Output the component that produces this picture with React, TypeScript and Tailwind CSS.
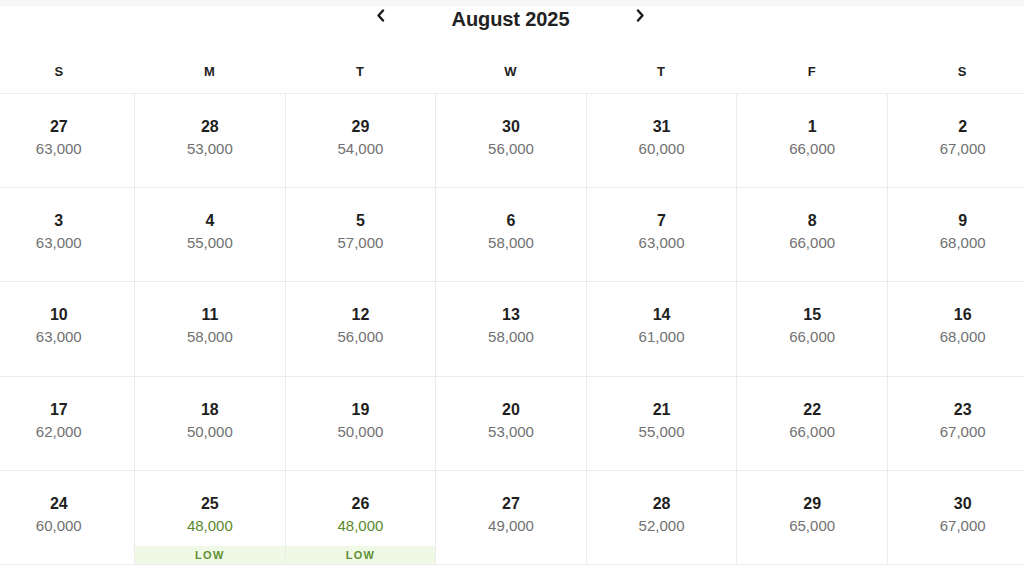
import React from "react";

type Day = { day: number; price: number; low?: boolean };

const WEEKDAYS = ["S", "M", "T", "W", "T", "F", "S"];

const WEEKS: Day[][] = [
  [
    { day: 27, price: 63000 },
    { day: 28, price: 53000 },
    { day: 29, price: 54000 },
    { day: 30, price: 56000 },
    { day: 31, price: 60000 },
    { day: 1, price: 66000 },
    { day: 2, price: 67000 },
  ],
  [
    { day: 3, price: 63000 },
    { day: 4, price: 55000 },
    { day: 5, price: 57000 },
    { day: 6, price: 58000 },
    { day: 7, price: 63000 },
    { day: 8, price: 66000 },
    { day: 9, price: 68000 },
  ],
  [
    { day: 10, price: 63000 },
    { day: 11, price: 58000 },
    { day: 12, price: 56000 },
    { day: 13, price: 58000 },
    { day: 14, price: 61000 },
    { day: 15, price: 66000 },
    { day: 16, price: 68000 },
  ],
  [
    { day: 17, price: 62000 },
    { day: 18, price: 50000 },
    { day: 19, price: 50000 },
    { day: 20, price: 53000 },
    { day: 21, price: 55000 },
    { day: 22, price: 66000 },
    { day: 23, price: 67000 },
  ],
  [
    { day: 24, price: 60000 },
    { day: 25, price: 48000, low: true },
    { day: 26, price: 48000, low: true },
    { day: 27, price: 49000 },
    { day: 28, price: 52000 },
    { day: 29, price: 65000 },
    { day: 30, price: 67000 },
  ],
];

function Chevron({ dir }: { dir: "left" | "right" }) {
  return (
    <svg width="10" height="13" viewBox="0 0 10 13" className="-translate-y-[4px]">
      <polyline
        points={dir === "left" ? "7,1.5 2.5,6.5 7,11.5" : "3,1.5 7.5,6.5 3,11.5"}
        fill="none"
        stroke="#1a1a1a"
        strokeWidth="2.4"
        strokeLinecap="round"
        strokeLinejoin="round"
      />
    </svg>
  );
}

export default function App() {
  return (
    <div className="w-[1024px] h-[567px] overflow-hidden bg-white font-['Liberation_Sans',Arial,sans-serif] text-[#222]">
      <div className="h-[6px] bg-[#f7f7f7]" />
      <div className="w-[1054px] -ml-[16.5px]">
        <div className="h-[27px] flex items-center justify-center gap-[66px]">
          <Chevron dir="left" />
          <h2 className="text-[20px] leading-[27px] font-bold tracking-[-0.1px]">August 2025</h2>
          <Chevron dir="right" />
        </div>

        <div className="grid grid-cols-7 h-[60px] items-end pb-[13px]">
          {WEEKDAYS.map((d, i) => (
            <div key={i} className="text-center text-[13px] leading-[16px] font-bold">
              {d}
            </div>
          ))}
        </div>

        <div className="grid grid-cols-7 border-b border-[#ececec]">
          {WEEKS.flat().map((d, i) => (
            <div
              key={i}
              className={`h-[94.2px] flex flex-col items-center border-t border-[#ececec] pt-[23px] ${
                i % 7 === 0 ? "" : "border-l"
              }`}
            >
              <div className="text-[16px] leading-[20px] font-bold text-[#1f1f1f]">{d.day}</div>
              <div
                className={`mt-[2px] text-[15px] leading-[20px] ${
                  d.low ? "text-[#5a8a2c]" : "text-[#717171]"
                }`}
              >
                {d.price.toLocaleString("en-US")}
              </div>
              {d.low && (
                <div className="mt-auto w-full h-[18px] bg-[#eff9e5] flex items-center justify-center text-[11px] font-bold tracking-[1.3px] text-[#5f8f33]">
                  LOW
                </div>
              )}
            </div>
          ))}
        </div>
      </div>
    </div>
  );
}
